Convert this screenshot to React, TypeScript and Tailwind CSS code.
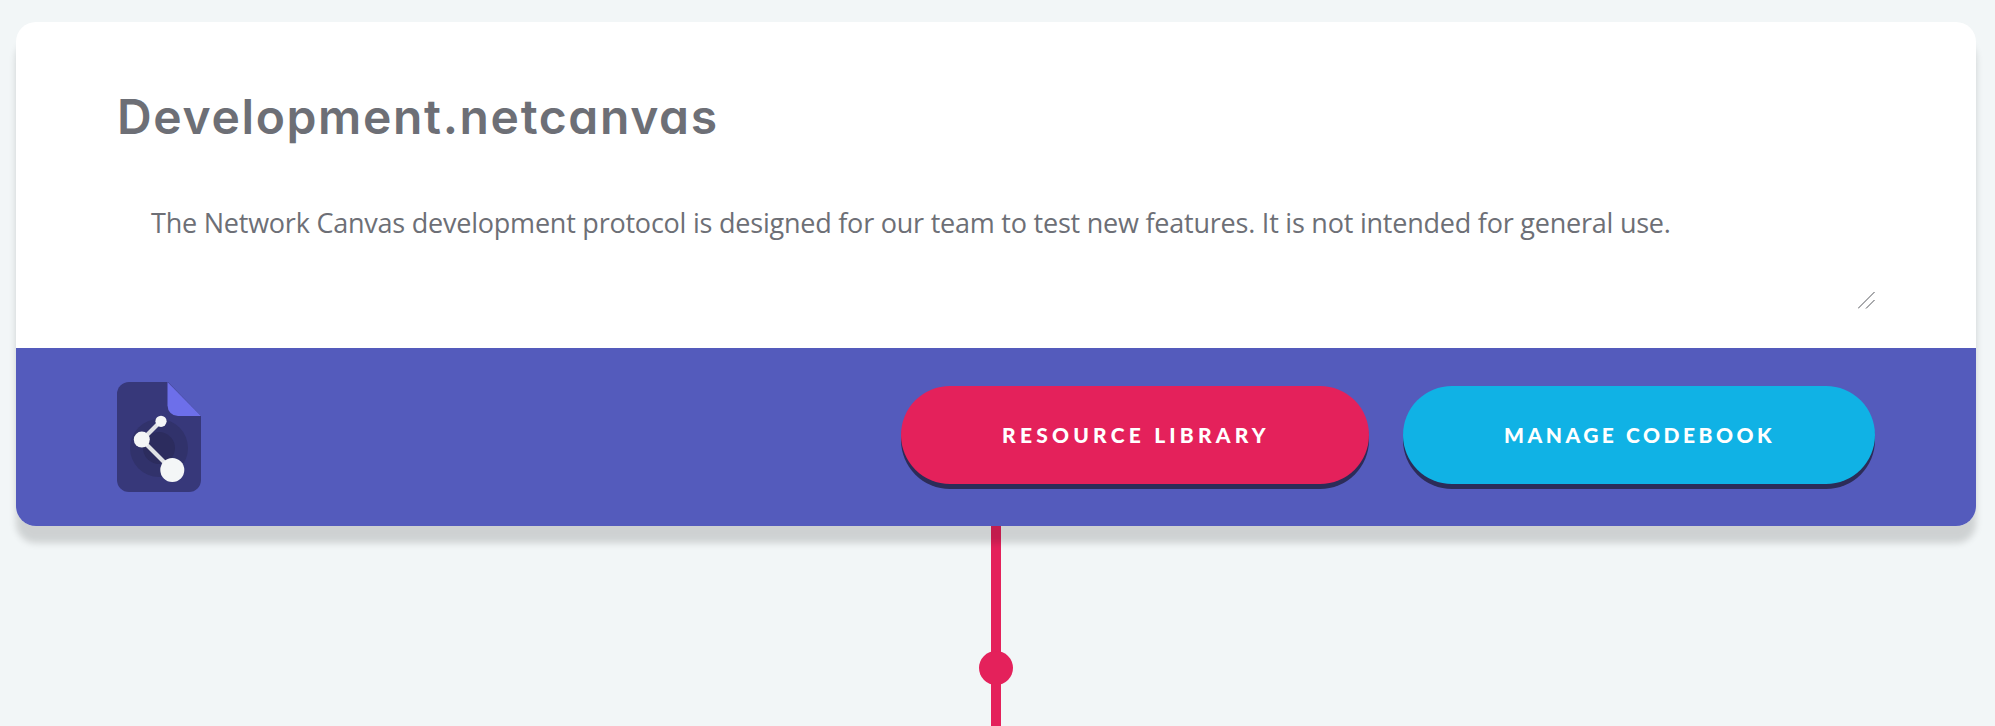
function ProtocolIcon() {
  return (
    <svg width="84" height="110" viewBox="0 0 84 110" className="block shrink-0" aria-hidden="true">
      <path d="M12 0H51L84 34V98A12 12 0 0 1 72 110H12A12 12 0 0 1 0 98V12A12 12 0 0 1 12 0Z" fill="#37387a" />
      <circle cx="42" cy="66" r="29" fill="#31326b" />
      <circle cx="42" cy="66" r="16" fill="#2c2c5e" />
      <path d="M50.500 0L84 34H61A10.500 10.500 0 0 1 50.500 23.500Z" fill="#6d6fea" />
      <path d="M44 39L25 58L55 88" fill="none" stroke="#e0e2e6" strokeWidth="4.200" />
      <circle cx="44" cy="39.300" r="5.600" fill="#f4f6f7" />
      <circle cx="24.800" cy="57.600" r="8" fill="#f4f6f7" />
      <circle cx="55.300" cy="88" r="12" fill="#f4f6f7" />
    </svg>
  );
}

function ResizeHandle() {
  return (
    <svg width="17" height="17" viewBox="0 0 17 17" className="block" aria-hidden="true">
      <path d="M0 16.500L16.500 0M8 16.500L16.500 8" stroke="#55565c" strokeWidth="1" />
    </svg>
  );
}

export default function App() {
  return (
    <div className="flex h-[726px] w-full flex-col overflow-hidden bg-[#f2f6f7] pl-4 pr-[19px] pt-[22px] font-['Lato',sans-serif] text-[#6d6f76]">
      <section className="relative z-10 flex h-[504px] shrink-0 flex-col rounded-[20px] shadow-[0_17px_7px_rgba(0,0,0,0.15)]">
        <div className="flex h-[326px] flex-col rounded-t-[20px] bg-white pl-[101px] pr-[101px] pt-[65px]">
          <h1 className="h-[60px] whitespace-nowrap font-['Inter',sans-serif] text-[48px] font-semibold leading-[60px] tracking-[1.65px] [font-feature-settings:'cv11']">
            Development.netcanvas
          </h1>
          <p className="mt-[52px] h-[48px] whitespace-nowrap pl-[34px] font-['Open_Sans',sans-serif] text-[27px] leading-[48px] tracking-[-0.225px]">
            The Network Canvas development protocol is designed for our team to test new features. It is not intended for general use.
          </p>
          <div className="mt-[45px] flex justify-end">
            <ResizeHandle />
          </div>
        </div>
        <div className="flex h-[178px] items-center justify-between rounded-b-[20px] bg-[#545bbc] px-[101px]">
          <ProtocolIcon />
          <div className="-mt-[4px] flex gap-[34px] text-[21px] font-black uppercase text-white">
            <button className="h-[98px] w-[468px] whitespace-nowrap rounded-full bg-[#e4215b] pl-[2px] tracking-[4.2px] shadow-[0_5px_0_#2c2c58]">
              RESOURCE LIBRARY
            </button>
            <button className="h-[98px] w-[472px] whitespace-nowrap rounded-full bg-[#10b2e5] pl-[1px] tracking-[3.5px] shadow-[0_5px_0_#2c2c58]">
              MANAGE CODEBOOK
            </button>
          </div>
        </div>
      </section>
      <div className="flex flex-1 flex-col items-center">
        <div className="h-[126px] w-[10px] bg-[#e4215b]" />
        <div className="-mt-px size-[34px] shrink-0 rounded-full bg-[#e4215b]" />
        <div className="-mt-px w-[10px] flex-1 bg-[#e4215b]" />
      </div>
    </div>
  );
}
